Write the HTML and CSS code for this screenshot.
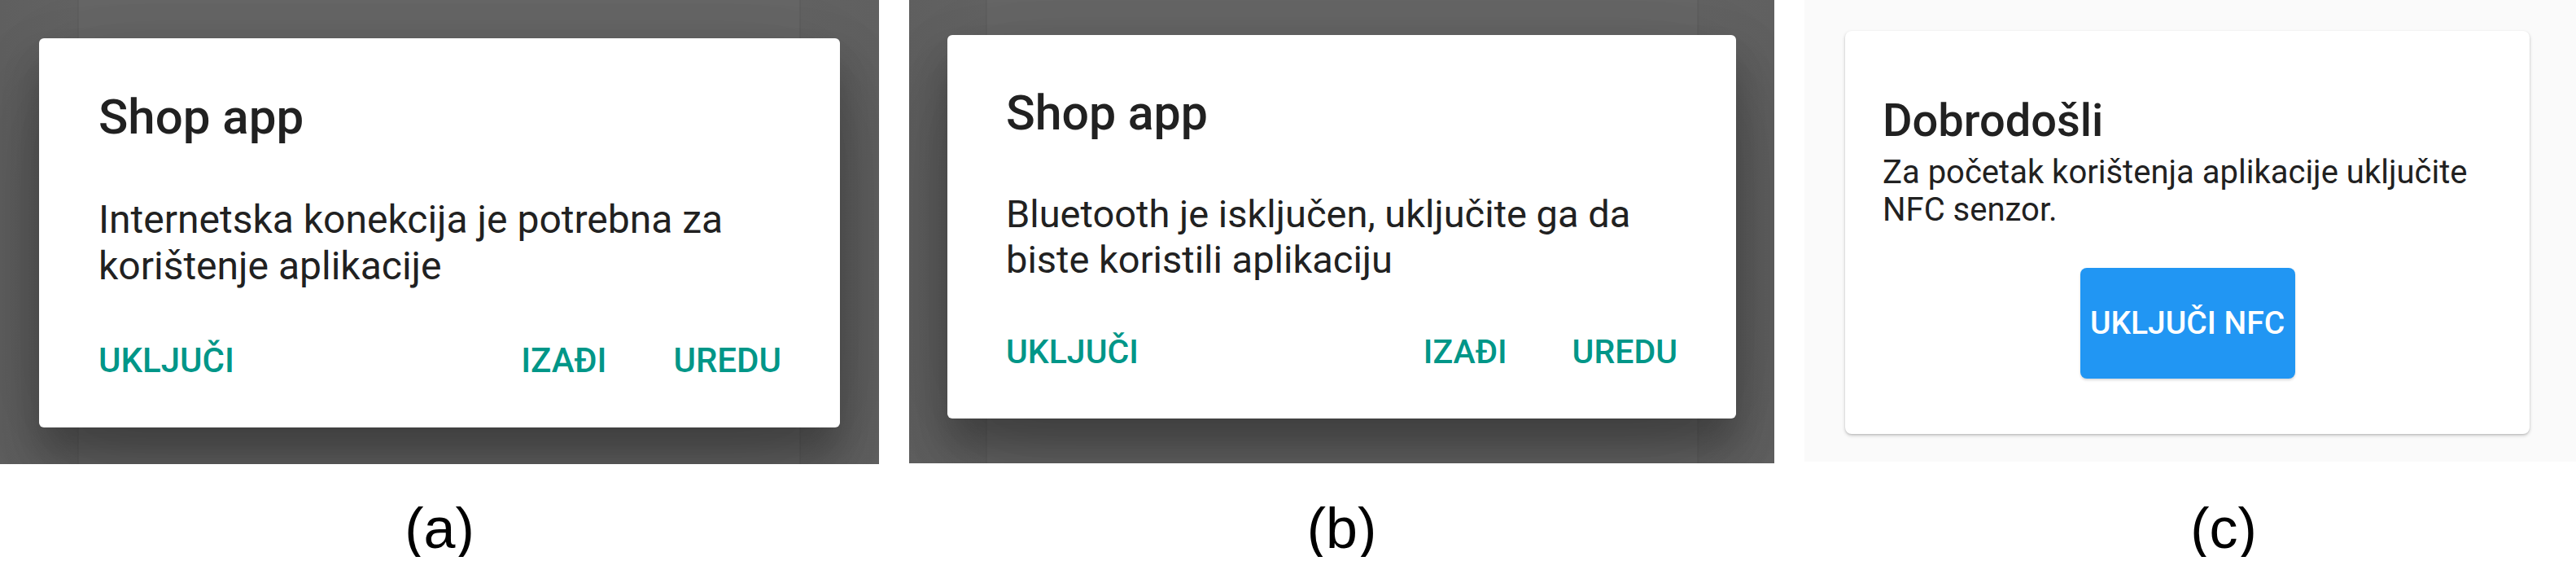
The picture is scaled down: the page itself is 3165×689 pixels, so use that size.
FILE: index.html
```html
<!DOCTYPE html>
<html lang="hr">
<head>
<meta charset="utf-8">
<title>Shop app – dijalozi</title>
<link rel="stylesheet" href="styles.css">
</head>
<body>
<div class="figure">
  <div class="panel panel-a">
    <div class="dialog dialog-a">
      <h2 class="dialog-title">Shop app</h2>
      <p class="dialog-body">Internetska konekcija je potrebna za korištenje aplikacije</p>
      <div class="dialog-actions">
        <span class="action action-left">UKLJUČI</span>
        <span class="action">IZAĐI</span>
        <span class="action">UREDU</span>
      </div>
    </div>
  </div>
  <div class="panel panel-b">
    <div class="dialog dialog-b">
      <h2 class="dialog-title">Shop app</h2>
      <p class="dialog-body">Bluetooth je isključen, uključite ga da biste koristili aplikaciju</p>
      <div class="dialog-actions">
        <span class="action action-left">UKLJUČI</span>
        <span class="action">IZAĐI</span>
        <span class="action">UREDU</span>
      </div>
    </div>
  </div>
  <div class="panel panel-c">
    <div class="card">
      <h2 class="card-title">Dobrodošli</h2>
      <p class="card-body">Za početak korištenja aplikacije uključite NFC senzor.</p>
      <div class="card-actions">
        <span class="nfc-button">UKLJUČI NFC</span>
      </div>
    </div>
  </div>
  <div class="label">(a)</div>
  <div class="label">(b)</div>
  <div class="label">(c)</div>
</div>
</body>
</html>
```
FILE: styles.css
```css
html, body {
  margin: 0;
  padding: 0;
  background: #ffffff;
  overflow: hidden;
}

.figure {
  display: grid;
  grid-template-columns: 1080px 1063px 1030px;
  grid-template-rows: 570px auto;
  column-gap: 37px;
  align-items: start;
  font-family: Roboto, "Noto Sans", sans-serif;
}

.panel {
  overflow: hidden;
  display: flex;
  flex-direction: column;
  align-items: flex-start;
}

.panel-a {
  height: 570px;
  background: linear-gradient(90deg, #606060 0, #636363 95px, #5b5b5b 96px, #676767 97px, #676767 982px, #5b5b5b 983px, #636363 984px, #616161 100%);
}

.panel-b {
  height: 569px;
  background: linear-gradient(90deg, #606060 0, #636363 94px, #5b5b5b 95px, #676767 96px, #676767 968px, #5b5b5b 969px, #636363 970px, #616161 100%);
}

.panel-c {
  height: 567px;
  width: 1030px;
  background: #fafafa;
}

/* Material dialogs */
.dialog {
  background: #ffffff;
  border-radius: 6px;
  display: flex;
  flex-direction: column;
  box-sizing: border-box;
  box-shadow: 0 33px 45px rgba(0, 0, 0, 0.22), 0 60px 110px rgba(0, 0, 0, 0.16), 0 20px 130px rgba(0, 0, 0, 0.12);
  color: #212121;
}

.dialog-a {
  margin: 47px 0 0 48px;
  width: 984px;
  height: 478px;
  padding: 62px 72px 0 73px;
}

.dialog-b {
  margin: 43px 0 0 47px;
  width: 969px;
  height: 471px;
  padding: 61px 72px 0 72px;
}

.dialog-title {
  margin: 0;
  font-size: 60px;
  line-height: 70px;
  font-weight: 500;
}

.dialog-body {
  margin: 62px 0 0;
  font-size: 48px;
  line-height: 57px;
  font-weight: 400;
}

.dialog-actions {
  margin-top: 67px;
  display: flex;
  gap: 82px;
}

.action {
  font-size: 42px;
  line-height: 42px;
  font-weight: 500;
  color: #009688;
}

.action-left {
  margin-right: auto;
}

.dialog-b .dialog-title {
  font-size: 59px;
  line-height: 69px;
}

.dialog-b .dialog-body {
  margin-top: 62px;
  font-size: 47px;
  line-height: 56px;
}

.dialog-b .dialog-actions {
  margin-top: 65px;
  gap: 80px;
}

.dialog-b .action {
  font-size: 41px;
  line-height: 41px;
}

/* NFC card */
.card {
  margin: 38px 0 0 50px;
  width: 841px;
  height: 495px;
  box-sizing: border-box;
  padding: 77px 46px 0 46px;
  background: #ffffff;
  border-radius: 8px;
  box-shadow: 0 2px 4px rgba(0, 0, 0, 0.18), 0 1px 2px rgba(0, 0, 0, 0.12);
  color: #212121;
  display: flex;
  flex-direction: column;
}

.card-title {
  margin: 0;
  font-size: 56px;
  line-height: 66px;
  font-weight: 500;
}

.card-body {
  margin: 8px 0 0;
  font-size: 40px;
  line-height: 46px;
  font-weight: 400;
}

.card-actions {
  margin-top: 48px;
  display: flex;
  justify-content: center;
}

.nfc-button {
  width: 264px;
  height: 136px;
  display: flex;
  align-items: center;
  justify-content: center;
  background: #2196f3;
  color: #ffffff;
  border-radius: 8px;
  font-size: 39px;
  font-weight: 500;
  box-shadow: 0 2px 3px rgba(0, 0, 0, 0.15);
}

/* captions */
.label {
  margin-top: 44px;
  text-align: center;
  font-family: "Liberation Sans", Arial, sans-serif;
  font-size: 70px;
  line-height: 70px;
  color: #000000;
}
```
